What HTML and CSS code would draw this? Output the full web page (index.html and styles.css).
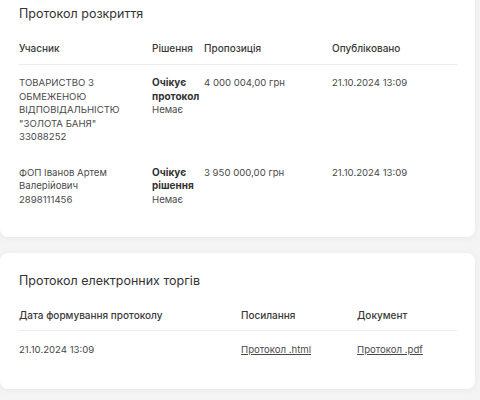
FILE: index.html
```html
<!DOCTYPE html>
<html lang="uk">
<head>
<meta charset="utf-8">
<link rel="stylesheet" href="styles.css">
</head>
<body>
<div class="page">
  <section class="card card-first">
    <h2 class="card-title">Протокол розкриття</h2>
    <table class="tbl tbl-open">
      <colgroup>
        <col class="c1"><col class="c2"><col class="c3"><col class="c4">
      </colgroup>
      <thead>
        <tr><th>Учасник</th><th>Рішення</th><th>Пропозиція</th><th>Опубліковано</th></tr>
      </thead>
      <tbody>
        <tr>
          <td>ТОВАРИСТВО З ОБМЕЖЕНОЮ ВІДПОВІДАЛЬНІСТЮ "ЗОЛОТА БАНЯ"<br>33088252</td>
          <td class="status"><b>Очікує протокол</b><br>Немає</td>
          <td>4 000 004,00 грн</td>
          <td>21.10.2024 13:09</td>
        </tr>
        <tr>
          <td>ФОП Іванов Артем Валерійович<br>2898111456</td>
          <td class="status"><b>Очікує рішення</b><br>Немає</td>
          <td>3 950 000,00 грн</td>
          <td>21.10.2024 13:09</td>
        </tr>
      </tbody>
    </table>
  </section>
  <section class="card">
    <h2 class="card-title">Протокол електронних торгів</h2>
    <table class="tbl tbl-proto">
      <colgroup>
        <col class="d1"><col class="d2"><col class="d3">
      </colgroup>
      <thead>
        <tr><th>Дата формування протоколу</th><th>Посилання</th><th>Документ</th></tr>
      </thead>
      <tbody>
        <tr>
          <td>21.10.2024 13:09</td>
          <td><a href="#" class="link">Протокол .html</a></td>
          <td><a href="#" class="link">Протокол .pdf</a></td>
        </tr>
      </tbody>
    </table>
  </section>
</div>
</body>
</html>
```
FILE: styles.css
```css
html, body {
  margin: 0;
  padding: 0;
  background: #f4f4f4;
}
body {
  font-family: Inter, "Noto Sans", sans-serif;
  color: #333;
  width: 480px;
  height: 400px;
  overflow: hidden;
}
.page {
  display: flex;
  flex-direction: column;
  gap: 16px;
  width: 475px;
  margin-top: -14px;
}
.card {
  background: #fff;
  border-radius: 8px;
  box-shadow: 0 1px 6px rgba(0,0,0,0.06);
  padding: 18px 18px 20px 19px;
}
.card-title {
  margin: 0 0 16px;
  font-size: 12.5px;
  line-height: 20px;
  font-weight: 400;
  color: #333;
}
.tbl {
  width: 100%;
  border-collapse: collapse;
  table-layout: fixed;
  font-size: 9.6px;
}
.tbl th {
  text-align: left;
  font-weight: 500;
  color: #3a3a3a;
  font-size: 10px;
  line-height: 16px;
  padding: 0 0 8px;
  border-bottom: 1px solid #ececec;
}
.tbl td {
  vertical-align: top;
  padding: 11px 0 11px;
  line-height: 13.5px;
  color: #4a4a4a;
}
.tbl td:first-child { padding-right: 12px; }
.status b { font-weight: 700; color: #333; font-size: 10px; }
.c1 { width: 133px; }
.c2 { width: 52px; }
.c3 { width: 128px; }
.tbl-proto th { padding-bottom: 7px; }
.tbl-proto td { padding: 12px 0 12px; line-height: 14px; }
.d1 { width: 222px; }
.d2 { width: 116px; }
.link { color: #4a4a4a; text-decoration: underline; }
```
